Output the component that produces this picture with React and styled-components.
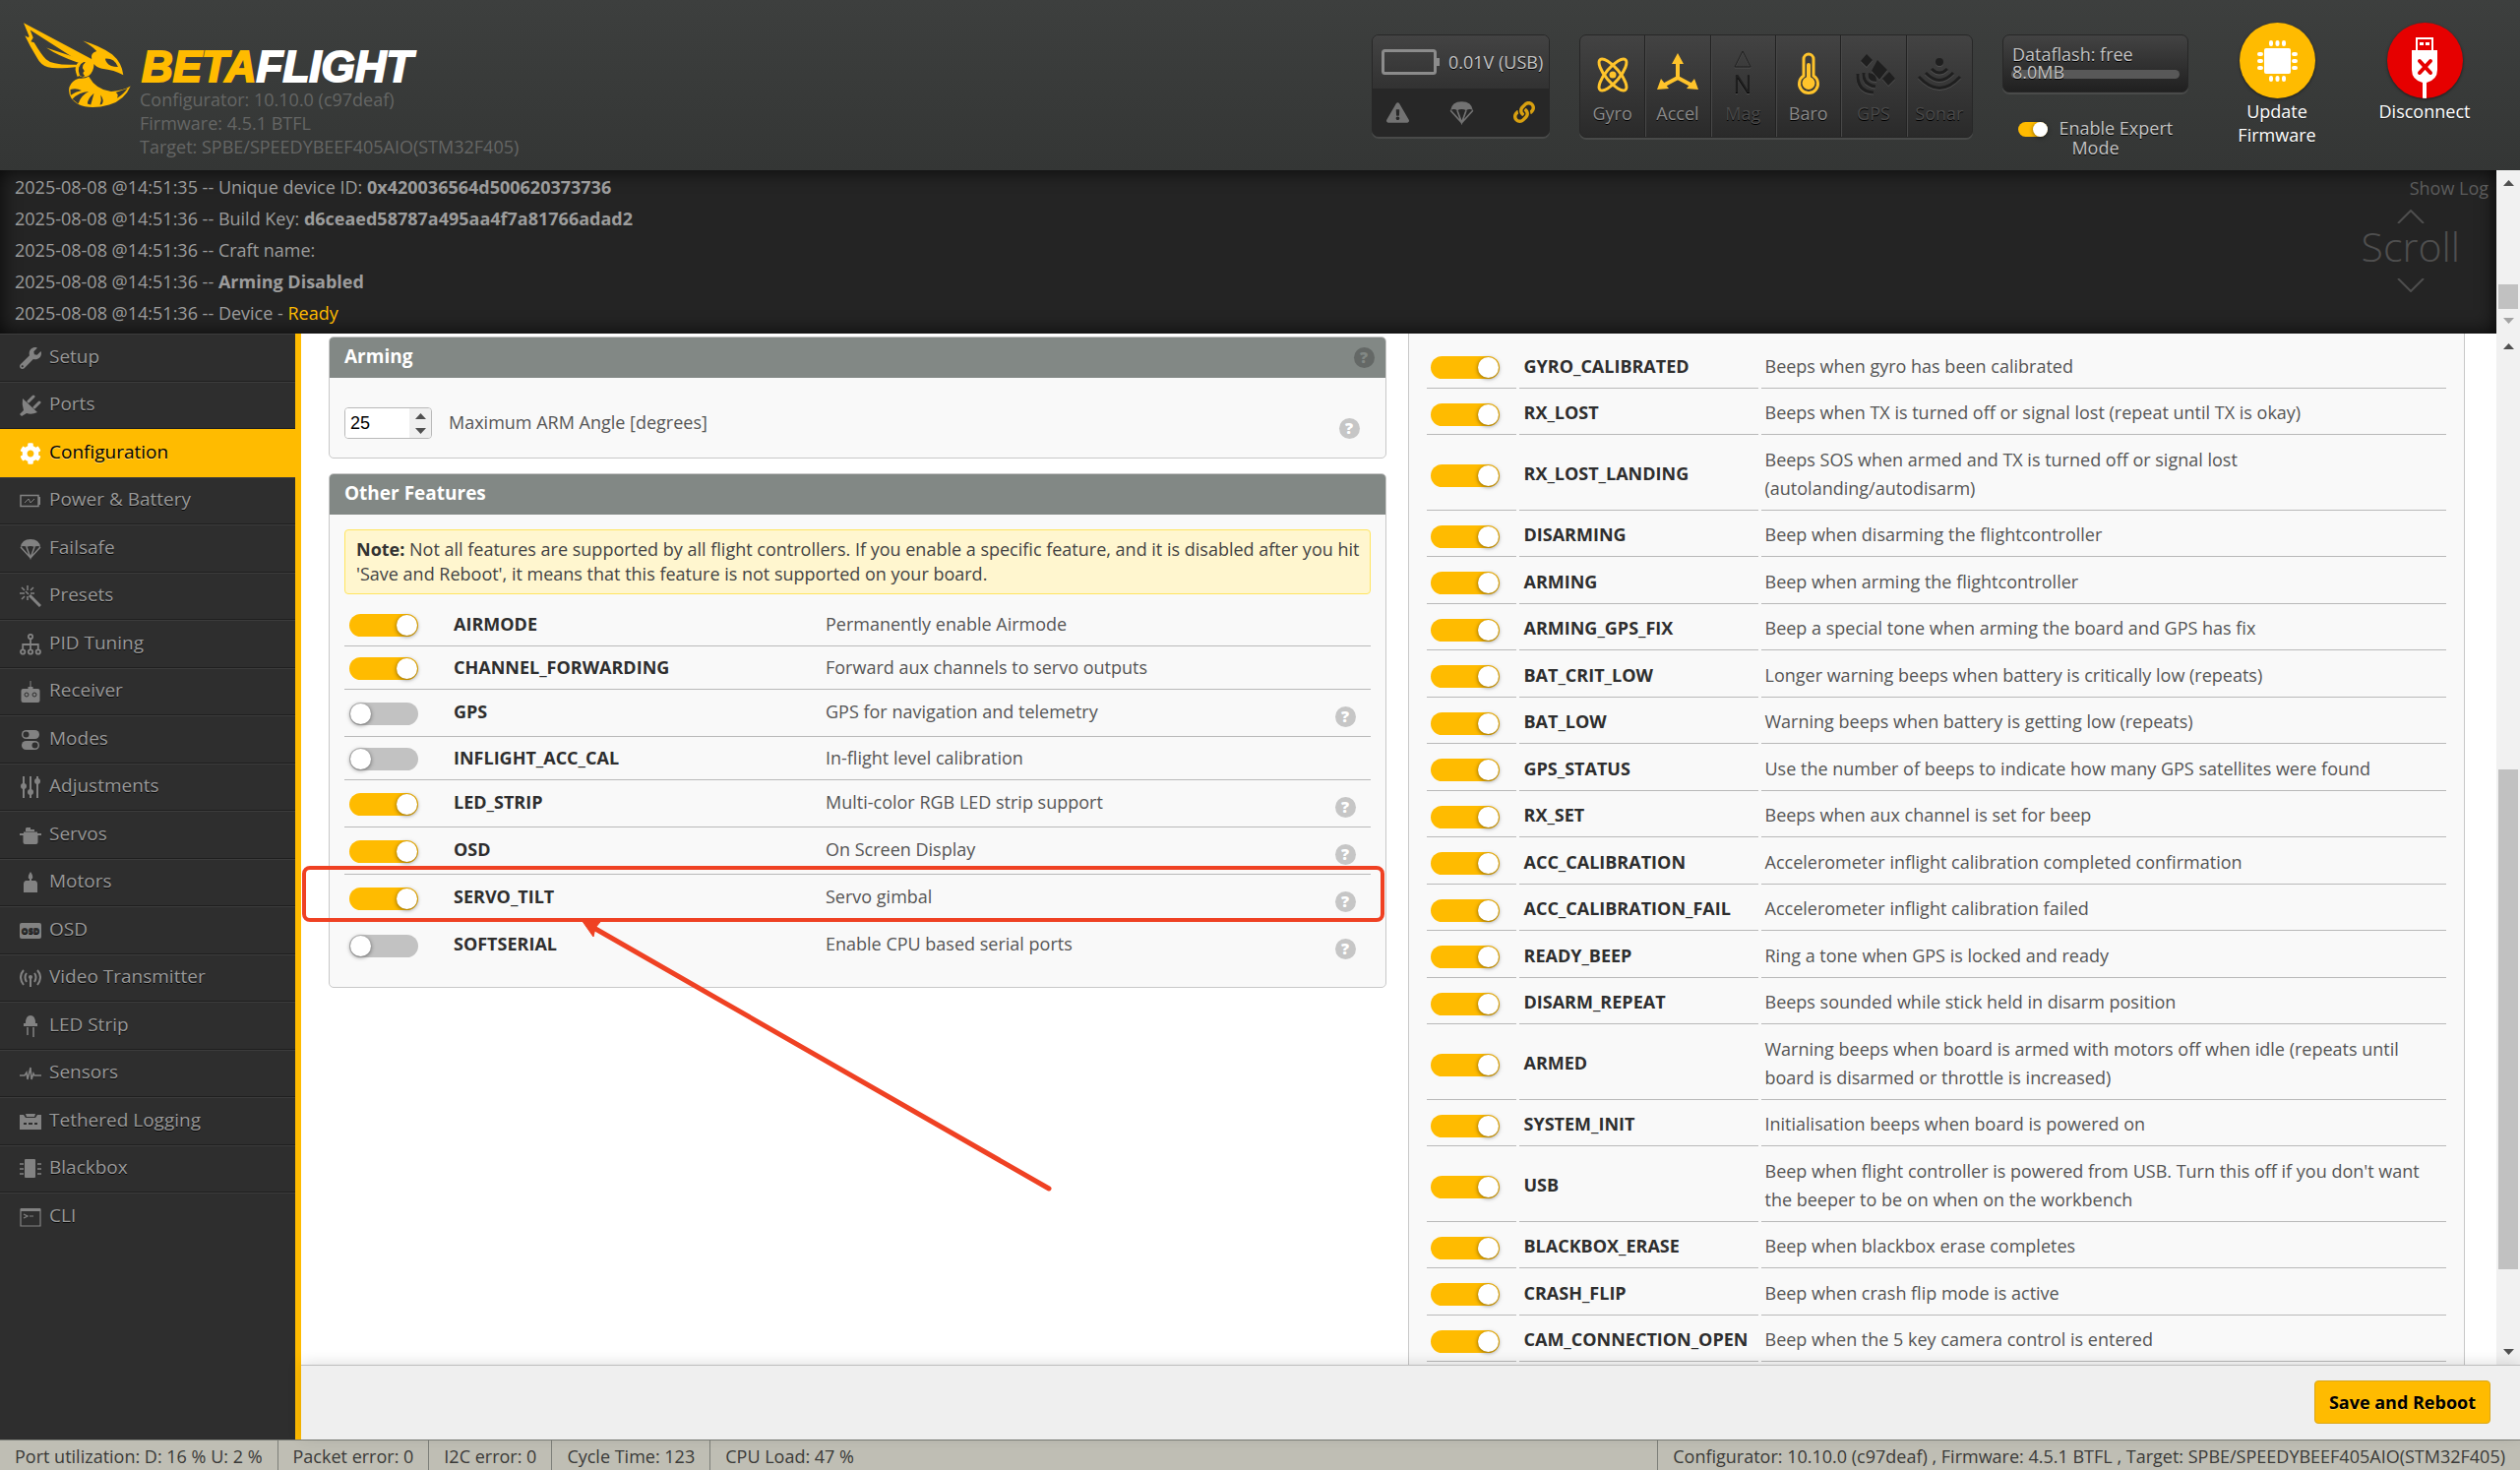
import React, { useState } from 'react';
import styled, { createGlobalStyle, css } from 'styled-components';
import { FaWrench, FaCog, FaLink, FaExclamationTriangle } from 'react-icons/fa';

const GlobalStyle = createGlobalStyle`
	* {
		box-sizing: border-box;
	}
	body {
		margin: 0;
		background: #2e2e2e;
		font-family: 'Open Sans', 'Noto Sans', sans-serif;
		font-size: 18px;
		line-height: 24px;
	}
	button, input {
		font: inherit;
	}
`;

const Page = styled.div`
	display: flex;
	flex-direction: column;
	height: 100vh;
	overflow: hidden;
`;

/* ---------- header ---------- */

const Header = styled.header`
	display: flex;
	flex: none;
	align-items: flex-start;
	gap: 30px;
	height: 173px;
	padding: 0 47px 0 24px;
	background: linear-gradient(to bottom, #3d3f3e, #343635);
`;

const Brand = styled.div`
	display: flex;
	gap: 9px;
	margin-right: auto;
	svg {
		margin-top: 22px;
	}
`;

const BrandText = styled.div`
	padding-top: 46px;
	color: #656665;
`;

const Wordmark = styled.h1`
	margin: 0;
	height: 43px;
	padding-left: 2px;
	font-family: 'Liberation Sans', Arial, sans-serif;
	font-size: 44px;
	font-weight: bold;
	font-style: italic;
	line-height: 44px;
	color: #fff;
	-webkit-text-stroke: 2px currentColor;
	span {
		color: #ffbb00;
	}
`;

const insetPanel = css`
	border: 1px solid #272727;
	border-radius: 7px;
	background: linear-gradient(to bottom, #434343, #2a2a2a);
	box-shadow: 0 2px 0 rgba(92, 92, 92, 0.5);
	text-shadow: 0 1px rgba(0, 0, 0, 1);
`;

const PowerPanel = styled.div`
	${insetPanel}
	width: 181px;
	height: 104px;
	margin-top: 35px;
	overflow: hidden;
`;

const PowerTop = styled.div`
	display: flex;
	align-items: center;
	gap: 9px;
	height: 54px;
	padding-left: 9px;
	color: #c4c4c4;
	background: linear-gradient(to bottom, #434343, #323232);
	white-space: nowrap;
`;

const PowerIcons = styled.div`
	display: flex;
	align-items: center;
	justify-content: space-between;
	height: 48px;
	padding: 0 14px;
	color: #727272;
	background: #272727;
	svg:last-child {
		color: #d8a010;
	}
`;

const SensorPanel = styled.div`
	${insetPanel}
	display: grid;
	grid-template-columns: repeat(6, 1fr);
	width: 400px;
	height: 105px;
	margin-top: 35px;
`;

const Sensor = styled.div`
	display: flex;
	flex-direction: column;
	align-items: center;
	gap: 6px;
	padding-top: 15px;
	color: ${(props) => (props.$on ? '#8b8b8b' : '#4a4a4a')};
	border-right: 1px solid #222;
	box-shadow: 1px 0 0 #484848;
	&:last-child {
		border-right: 0;
		box-shadow: none;
	}
	svg {
		overflow: visible;
		color: ${(props) => (props.$on ? '#ffc42b' : '#1f1f1f')};
		filter: ${(props) => (props.$on ? 'none' : 'drop-shadow(0 1px 0 #505050)')};
	}
`;

const FlashColumn = styled.div`
	width: 189px;
	margin-top: 35px;
	line-height: 18px;
	text-shadow: 0 1px #000;
	color: #c4c4c4;
`;

const FlashPanel = styled.div`
	${insetPanel}
	position: relative;
	height: 59px;
	padding: 10px 9px;
	background: linear-gradient(to bottom, #434343, #202020);
`;

const FlashBar = styled.div`
	position: absolute;
	left: 8px;
	right: 8px;
	top: 35px;
	height: 9px;
	border-radius: 5px;
	background: #585858;
`;

const FlashText = styled.div`
	position: relative;
	width: 140px;
`;

const ExpertLabel = styled.label`
	display: block;
	margin-top: 27px;
	text-align: center;
`;

const HeaderButtons = styled.div`
	display: flex;
	gap: 50px;
	margin: 23px 0 0 10px;
`;

const RoundButton = styled.button`
	display: flex;
	flex-direction: column;
	align-items: center;
	gap: 1px;
	width: 100px;
	padding: 0;
	border: 0;
	background: none;
	color: #fff;
	text-shadow: 0 1px rgba(0, 0, 0, 0.5);
	svg {
		border-radius: 50%;
		background: ${(props) => props.$color};
		box-shadow: 0 1px 3px rgba(0, 0, 0, 0.5);
	}
`;

/* ---------- switch ---------- */

const Switch = styled.input.attrs({ type: 'checkbox' })`
	appearance: none;
	display: inline-block;
	vertical-align: middle;
	position: relative;
	width: ${(props) => (props.$small ? 30 : 70)}px;
	height: ${(props) => (props.$small ? 15 : 23)}px;
	margin: ${(props) => (props.$small ? '0 7px 2px 0' : '0')};
	border-radius: 12px;
	background: #c2c2c2;
	&::before {
		content: '';
		position: absolute;
		top: ${(props) => (props.$small ? 0 : 1)}px;
		left: ${(props) => (props.$small ? 0 : 1)}px;
		width: ${(props) => (props.$small ? 15 : 21)}px;
		height: ${(props) => (props.$small ? 15 : 21)}px;
		border-radius: 50%;
		background: #fff;
		box-shadow: 0 1px 4px rgba(0, 0, 0, 0.5);
	}
	&:checked {
		background: #ffbb00;
	}
	&:checked::before {
		left: auto;
		right: ${(props) => (props.$small ? 0 : 1)}px;
	}
`;

/* ---------- log ---------- */

const Log = styled.section`
	display: flex;
	flex: none;
	height: 166px;
	background: #242424;
	color: #9c9c9c;
`;

const LogBody = styled.div`
	display: flex;
	flex: 1;
	justify-content: space-between;
	padding: 1px 8px 0 15px;
	box-shadow: inset 0 0 20px rgba(0, 0, 0, 0.8);
`;

const LogLine = styled.p`
	margin: 0;
	line-height: 32px;
	white-space: nowrap;
	span {
		color: #ffbb00;
	}
`;

const LogSide = styled.div`
	display: flex;
	flex-direction: column;
	align-items: flex-end;
	padding-top: 5px;
`;

const ShowLog = styled.button`
	padding: 0;
	border: 0;
	background: none;
	color: #5c5c5c;
`;

const ScrollHint = styled.div`
	display: flex;
	flex-direction: column;
	align-items: center;
	margin: 10px 29px 0 0;
	font-size: 41px;
	font-weight: 300;
	line-height: 46px;
	color: #4f4f4f;
	svg:last-child {
		margin-top: 10px;
	}
`;

const Track = styled.div`
	display: flex;
	flex: none;
	flex-direction: column;
	justify-content: space-between;
	align-items: center;
	width: 24px;
	padding: 10px 0;
	background: #f1f1f1;
	color: #505050;
`;

const Thumb = styled.div`
	width: 20px;
	height: ${(props) => props.$size};
	margin-top: ${(props) => props.$before};
	margin-bottom: auto;
	background: #c1c1c1;
`;

/* ---------- sidebar ---------- */

const Main = styled.div`
	display: flex;
	flex: 1;
	min-height: 0;
`;

const Sidebar = styled.nav`
	flex: none;
	width: 306px;
	border-right: 6px solid #ffbb00;
	background: #2e2e2e;
	ul {
		margin: 0;
		padding: 0;
		list-style: none;
	}
	li:nth-child(even) a {
		height: 48px;
	}
`;

const NavLink = styled.a`
	display: flex;
	align-items: center;
	gap: 8px;
	height: 49px;
	padding: 0 20px 4px;
	border-top: 1px solid #3c3c3c;
	border-bottom: 1px solid #1f1f1f;
	font-size: 19px;
	color: #999;
	text-decoration: none;
	text-shadow: 0 1px rgba(0, 0, 0, 0.9);
	svg {
		flex: none;
		margin-top: 4px;
		color: #828282;
	}
	${(props) =>
		props.$last &&
		css`
			border-bottom: 0;
		`}
	${(props) =>
		props.$active &&
		css`
			border-color: #ffbb00;
			background: #ffbb00;
			color: #000;
			text-shadow: 0 1px rgba(255, 255, 255, 0.45);
			svg {
				color: #fff;
			}
		`}
`;

/* ---------- content ---------- */

const Content = styled.main`
	display: flex;
	flex: 1;
	flex-direction: column;
	min-width: 0;
	background: #fff;
`;

const ScrollArea = styled.div`
	display: flex;
	flex: 1;
	min-height: 0;
`;

const Columns = styled.div`
	position: relative;
	display: grid;
	grid-template-columns: 1fr 1fr;
	gap: 22px;
	flex: 1;
	padding: 0 32px 0 28px;
`;

const LeftColumn = styled.div`
	display: flex;
	flex-direction: column;
	gap: 15px;
	padding-top: 3px;
`;

const Panel = styled.section`
	overflow: hidden;
	border: 1px solid #c8c8c8;
	border-radius: 5px;
	background: #f9f9f9;
`;

const PanelHead = styled.div`
	display: flex;
	align-items: center;
	justify-content: space-between;
	height: 41px;
	padding: 0 11px 0 15px;
	background: #828885;
	h2 {
		margin: 0;
		padding-bottom: 3px;
		font-size: 19px;
		font-weight: 700;
		color: #fff;
	}
`;

const ArmingBody = styled.div`
	display: flex;
	align-items: center;
	padding: 30px 26px 19px 15px;
	label {
		margin: 0 auto 3px 17px;
		color: #555;
	}
`;

const Stepper = styled.div`
	display: flex;
	width: 89px;
	height: 32px;
	overflow: hidden;
	border: 1px solid #b9b9b9;
	border-radius: 4px;
	input {
		flex: 1;
		min-width: 0;
		padding: 0 5px;
		border: 0;
		font-family: 'Liberation Sans', Arial, sans-serif;
		color: #000;
		background: #fff;
		appearance: textfield;
	}
	input::-webkit-inner-spin-button {
		display: none;
	}
`;

const StepButtons = styled.div`
	display: flex;
	flex-direction: column;
	width: 22px;
	background: #f0f0f0;
	color: #505050;
	button {
		display: flex;
		flex: 1;
		align-items: center;
		justify-content: center;
		padding: 0;
		border: 0;
		background: none;
		color: inherit;
	}
`;

const HelpDot = styled.button`
	flex: none;
	width: 21px;
	height: 21px;
	padding: 0;
	border: 0;
	border-radius: 50%;
	background: ${(props) => (props.$dark ? '#646866' : '#c6c6c6')};
	color: ${(props) => (props.$dark ? '#828885' : '#fff')};
	font-size: 16px;
	font-weight: 800;
	line-height: 21px;
	align-self: ${(props) => (props.$low ? 'flex-end' : 'center')};
`;

const FeaturesBody = styled.div`
	padding: 15px 15px 19px;
`;

const Note = styled.p`
	margin: 0 0 8px;
	padding: 7px 8px 7px 11px;
	border: 1px solid #ffe55f;
	border-radius: 4px;
	background: #fff6cf;
	color: #434343;
	line-height: 25px;
	strong {
		font-weight: 700;
		color: #333;
	}
`;

const FeatureTable = styled.table`
	width: 100%;
	border-collapse: collapse;
	table-layout: fixed;
	color: #555;
	th, td {
		padding: 0;
		text-align: left;
	}
	th {
		font-weight: 700;
		color: #2e2e2e;
	}
`;

const FeatureRow = styled.tr`
	height: ${(props) => (props.$help ? 48 : 44)}px;
	&:not(:last-child) {
		border-bottom: 1px solid #b9b9b9;
	}
	th, td:nth-child(3) {
		padding-bottom: ${(props) => (props.$help ? 2 : 0)}px;
	}
	td:first-child {
		padding-left: 5px;
	}
	td:last-child {
		padding: 6px 15px 0 0;
		text-align: right;
	}
`;

const BeeperPanel = styled.section`
	overflow: hidden;
	min-width: 0;
	padding: 8px 15px 0;
	border: solid #c8c8c8;
	border-width: 0 1px;
	background: #f9f9f9;
`;

const BeeperTable = styled.table`
	width: 100%;
	border-spacing: 3px;
	table-layout: fixed;
	color: #555;
	line-height: 29px;
	th, td {
		height: 45px;
		padding: 0 4px;
		border-bottom: 1px solid #b9b9b9;
		text-align: left;
	}
	tr:nth-child(even) > * {
		height: 44px;
	}
	th {
		padding-left: 5px;
		font-weight: 700;
		color: #2e2e2e;
		white-space: nowrap;
	}
`;

const BeeperRow = styled.tr`
	${(props) =>
		props.$tall &&
		css`
			&& > * {
				height: 74px;
			}
		`}
`;

const Annotation = styled.svg`
	position: absolute;
	left: 0;
	top: 0;
	pointer-events: none;
`;

const Toolbar = styled.div`
	z-index: 1;
	display: flex;
	flex: none;
	align-items: flex-start;
	justify-content: flex-end;
	height: 76px;
	padding: 15px 30px 0;
	border-top: 1px solid #bdbdbd;
	background: #efefef;
	box-shadow: 0 -2px 14px rgba(0, 0, 0, 0.12);
`;

const SaveButton = styled.button`
	height: 44px;
	padding: 0 14px;
	border: 1px solid #dba718;
	border-radius: 4px;
	background: #ffbb00;
	color: #000;
	font-weight: 700;
	text-shadow: 0 1px rgba(255, 255, 255, 0.3);
`;

const StatusBar = styled.footer`
	display: flex;
	flex: none;
	height: 31px;
	border-top: 1px solid #7d7f79;
	background: #bfbeb4;
	color: #3a3a38;
	line-height: 32px;
	white-space: nowrap;
`;

const StatusItem = styled.span`
	padding: 0 15px;
	border-right: 1px solid #7d7f79;
	&:nth-last-child(2) {
		border-right: 0;
		margin-right: auto;
	}
	&:last-child {
		border-right: 0;
		border-left: 1px solid #7d7f79;
	}
`;

/* ---------- icons ---------- */

const BeeLogo = () => (
	<svg width='109' height='88' viewBox='24 24 326 262' fill='#ffbb00'>
		<path d='M24 27 L232 138 L216 148 L190 142 L44 49 L53 72 L46 84 L56 87 Q78 124 92 138 Q112 157 184 154 L192 160 Q122 169 98 162 Q76 156 64 132 Q44 100 28 66 L38 71 L41 68 Z' />
		<path d='M93 103 L212 142 L200 150 L186 147 Q130 128 93 103 Z' />
		<path d='M204 82 Q256 97 293 123 Q323 148 327 186 Q300 170 262 166 Q246 163 238 152 Q237 176 222 188 Q204 197 188 186 Q176 168 186 152 Q192 142 206 143 L231 138 Q226 118 246 113 Q232 98 204 82 Z' />
		<path fill='#393b3a' d='M272 136 Q300 134 311 161 Q286 161 278 149 Q273 143 272 136 Z' />
		<path fill='#393b3a' d='M207 146 Q184 156 194 186 Q202 194 210 188 Q200 180 209 174 L203 164 Q203 154 212 147 Z' />
		<path d='M190 154 Q178 170 188 192 L192 188 Q184 170 196 154 Z' />
		<path d='M192 196 Q210 198 222 190 Q244 230 290 236 Q330 232 349 219 Q331 262 284 276 Q226 292 189 274 Q156 254 163 222 Q170 202 192 196 Z' />
		<path fill='#393b3a' d='M166 230 Q184 224 200 233 Q182 236 167 247 Z M172 259 Q192 238 222 236 Q198 248 190 273 Z M218 273 Q218 258 238 241 L228 276 Z M256 276 Q262 262 258 246 Q270 262 262 275 Z M304 239 L340 226 Q330 242 308 256 Q314 244 304 239 Z' />
	</svg>
);

const sensorIcons = {
	Gyro: (
		<g fill='none' stroke='currentColor' strokeWidth='3'>
			<ellipse cx='22' cy='25' rx='7' ry='20' transform='rotate(40 22 25)' />
			<ellipse cx='22' cy='25' rx='7' ry='20' transform='rotate(-40 22 25)' />
			<circle cx='22' cy='25' r='3.500' fill='currentColor' stroke='none' />
		</g>
	),
	Accel: (
		<g fill='currentColor'>
			<path d='M22 3 L28 14 H16 Z M1 40 L5 29 L13 39 Z M43 40 L39 29 L31 39 Z' />
			<path d='M22 12 V28 L7 36 M22 28 L37 36' fill='none' stroke='currentColor' strokeWidth='4' />
		</g>
	),
	Mag: (
		<g>
			<path d='M22 1 L30 17 H14 Z' fill='none' stroke='currentColor' strokeWidth='1' />
			<text x='22' y='43' fontSize='25' textAnchor='middle' fill='currentColor'>
				N
			</text>
		</g>
	),
	Baro: (
		<g>
			<path
				d='M17 26 V9 a5 5 0 0 1 10 0 V26 a9.500 9.500 0 1 1 -10 0 Z'
				fill='none'
				stroke='currentColor'
				strokeWidth='3'
			/>
			<circle cx='22' cy='33.500' r='6.500' fill='currentColor' />
			<path d='M22 15 V32' stroke='currentColor' strokeWidth='4' strokeLinecap='round' />
		</g>
	),
	GPS: (
		<g fill='currentColor'>
			<path d='M15 4 L21 10 L15 17 L9 11 Z M26 10 L36 20 L28 30 L20 21 Z M38 22 L44 29 L37 36 L31 29 Z' />
			<path d='M17 23 Q26 24 25 32 Q15 32 17 23 Z' />
			<path
				d='M12 23 Q11 35 24 37 M6 24 Q5 42 22 43'
				fill='none'
				stroke='currentColor'
				strokeWidth='3'
			/>
		</g>
	),
	Sonar: (
		<g fill='none' stroke='currentColor' strokeWidth='3'>
			<circle cx='22' cy='12' r='4' fill='currentColor' stroke='none' />
			<path d='M14 19 Q22 27 30 19 M8 23 Q22 38 36 23 M1 27 Q22 50 43 27' />
		</g>
	),
};

const Parachute = ({ size = 22 }) => (
	<svg width={size} height={size} viewBox='0 0 22 22' fill='currentColor'>
		<path d='M1 9 Q2 1 11 1 Q20 1 21 9 Q18 7 15 9 Q11 7 7 9 Q4 7 1 9 Z' />
		<path d='M1 9 L11 20 L21 9 M7 9 L11 20 L15 9' fill='none' stroke='currentColor' strokeWidth='1.500' />
	</svg>
);

const NavIcon = ({ children }) => (
	<svg width='22' height='22' viewBox='0 0 22 22' fill='currentColor'>
		{children}
	</svg>
);

const line = { fill: 'none', stroke: 'currentColor' };

const navItems = [
	{ label: 'Setup', icon: <FaWrench size={22} /> },
	{
		label: 'Ports',
		icon: (
			<NavIcon>
				<path d='M3 4 L18 18 Q12 21 7 19 L2 22 L0 20 L4 16 Q2 10 3 4 Z' />
				<path {...line} strokeWidth='3' strokeLinecap='round' d='M9 7 L14 2 M15 13 L20 8' />
			</NavIcon>
		),
	},
	{ label: 'Configuration', icon: <FaCog size={22} />, active: true },
	{
		label: 'Power & Battery',
		icon: (
			<NavIcon>
				<path {...line} strokeWidth='1.500' d='M1 5.500 H19 V16.500 H1 Z' />
				<path {...line} strokeWidth='1' d='M5 13 L9 9 L11 13 L15 9' />
				<path d='M19 7 h2 v8 h-2 Z' />
			</NavIcon>
		),
	},
	{ label: 'Failsafe', icon: <Parachute /> },
	{
		label: 'Presets',
		icon: (
			<NavIcon>
				<path {...line} strokeWidth='3' d='M10 10 L21 21' />
				<path
					{...line}
					strokeWidth='1.500'
					d='M8 0 V5 M2 2 L5 5 M0 8 H5 M2 14 L5 11 M14 2 L11 5 M11 8 H15 M8 11 V15 M6 6 L9 9'
				/>
			</NavIcon>
		),
	},
	{
		label: 'PID Tuning',
		icon: (
			<NavIcon>
				<g {...line} strokeWidth='1.800'>
					<circle cx='11' cy='3' r='2.200' />
					<circle cx='3.200' cy='18.500' r='2.200' />
					<circle cx='11' cy='18.500' r='2.200' />
					<circle cx='18.800' cy='18.500' r='2.200' />
					<path d='M11 5 V16 M3.200 16 V11 H18.800 V16' />
				</g>
			</NavIcon>
		),
	},
	{
		label: 'Receiver',
		icon: (
			<NavIcon>
				<path d='M10.500 0 h1 v6 h2 v2 h5 q2 0 2 2 v10 q0 2 -2 2 h-15 q-2 0 -2 -2 v-10 q0 -2 2 -2 h5 v-2 h2 Z' />
				<circle cx='7' cy='14' r='2' fill='#828282' stroke='#2e2e2e' />
				<circle cx='15' cy='14' r='2' fill='#828282' stroke='#2e2e2e' />
			</NavIcon>
		),
	},
	{
		label: 'Modes',
		icon: (
			<NavIcon>
				<rect x='2' y='1' width='18' height='9' rx='4.500' />
				<rect x='2' y='12' width='18' height='9' rx='4.500' />
				<circle cx='6.500' cy='5.500' r='3' fill='#2e2e2e' />
				<circle cx='15.500' cy='16.500' r='3' fill='#2e2e2e' />
			</NavIcon>
		),
	},
	{
		label: 'Adjustments',
		icon: (
			<NavIcon>
				<path {...line} strokeWidth='2' d='M4 0 V22 M11 0 V22 M18 0 V22' />
				<circle cx='4' cy='10' r='3' />
				<circle cx='11' cy='16' r='3' />
				<circle cx='18' cy='5' r='3' />
			</NavIcon>
		),
	},
	{
		label: 'Servos',
		icon: (
			<NavIcon>
				<path d='M7 3 h4 v2 h4 v2 H6 V4 Z M4 7.500 H18 V9 H22 V11 H18.500 V18 q0 2 -2 2 H5.500 q-2 0 -2 -2 V11 H0 V9 H4 Z' />
			</NavIcon>
		),
	},
	{
		label: 'Motors',
		icon: (
			<NavIcon>
				<path d='M11 0 Q14 4 13 7 H12 V9 H16 Q18 10 18 12 V21 H4 V12 Q4 10 6 9 H10 V7 H9 Q8 4 11 0 Z' />
			</NavIcon>
		),
	},
	{
		label: 'OSD',
		icon: (
			<NavIcon>
				<rect x='0' y='3' width='22' height='16' rx='2' />
				<text x='11' y='14' fontSize='9' fontWeight='800' textAnchor='middle' fill='#2e2e2e'>
					OSD
				</text>
			</NavIcon>
		),
	},
	{
		label: 'Video Transmitter',
		icon: (
			<NavIcon>
				<g {...line} strokeWidth='2'>
					<path d='M4 3 Q-2 10 4 18 M7 6 Q4 10 7 15 M15 6 Q18 10 15 15 M18 3 Q24 10 18 18 M11 10 V20' />
				</g>
				<circle cx='11' cy='10' r='2' />
			</NavIcon>
		),
	},
	{
		label: 'LED Strip',
		icon: (
			<NavIcon>
				<path d='M6 8 Q6 0 11 0 Q16 0 16 8 H18 V11 H4 V8 Z' />
				<path {...line} strokeWidth='1.500' d='M8 12 V20 M14 12 V22' />
			</NavIcon>
		),
	},
	{
		label: 'Sensors',
		icon: (
			<NavIcon>
				<path {...line} strokeWidth='1.500' d='M0 13 H5 L7 10 L8 17 L11 5 L12 17 L14 11 L15 13 H22' />
			</NavIcon>
		),
	},
	{
		label: 'Tethered Logging',
		icon: (
			<NavIcon>
				<path d='M0 4 H4 L6 7 H16 L18 4 H22 V19 H0 Z M6 3 H16 L15 6 H7 Z' />
				<path stroke='#2e2e2e' strokeWidth='2' d='M4 13 H7 M9 13 H13 M15 13 H18' />
			</NavIcon>
		),
	},
	{
		label: 'Blackbox',
		icon: (
			<NavIcon>
				<rect x='5' y='1' width='11' height='19' rx='1' />
				<path {...line} strokeWidth='1.500' d='M0 6 H4 M0 11 H4 M0 16 H4 M18 6 H22 M18 11 H22 M18 16 H22' />
			</NavIcon>
		),
	},
	{
		label: 'CLI',
		icon: (
			<NavIcon>
				<path {...line} strokeWidth='1.200' d='M1 3 H21 V20 H1 Z M4 8 L8 10 L4 12 M10 10 H14' />
				<path d='M1 2 H21 V5 H1 Z' />
			</NavIcon>
		),
	},
];

const logLines = [
	['2025-08-08 @14:51:35 -- Unique device ID: ', <b>0x420036564d500620373736</b>],
	['2025-08-08 @14:51:36 -- Build Key: ', <b>d6ceaed58787a495aa4f7a81766adad2</b>],
	['2025-08-08 @14:51:36 -- Craft name:', null],
	['2025-08-08 @14:51:36 -- ', <b>Arming Disabled</b>],
	['2025-08-08 @14:51:36 -- Device - ', <span>Ready</span>],
];

const features = [
	{ name: 'AIRMODE', text: 'Permanently enable Airmode', on: true },
	{ name: 'CHANNEL_FORWARDING', text: 'Forward aux channels to servo outputs', on: true },
	{ name: 'GPS', text: 'GPS for navigation and telemetry', help: true },
	{ name: 'INFLIGHT_ACC_CAL', text: 'In-flight level calibration' },
	{ name: 'LED_STRIP', text: 'Multi-color RGB LED strip support', on: true, help: true },
	{ name: 'OSD', text: 'On Screen Display', on: true, help: true },
	{ name: 'SERVO_TILT', text: 'Servo gimbal', on: true, help: true },
	{ name: 'SOFTSERIAL', text: 'Enable CPU based serial ports', help: true },
];

const beepers = [
	['GYRO_CALIBRATED', 'Beeps when gyro has been calibrated'],
	['RX_LOST', 'Beeps when TX is turned off or signal lost (repeat until TX is okay)'],
	['RX_LOST_LANDING', 'Beeps SOS when armed and TX is turned off or signal lost (autolanding/autodisarm)', true],
	['DISARMING', 'Beep when disarming the flightcontroller'],
	['ARMING', 'Beep when arming the flightcontroller'],
	['ARMING_GPS_FIX', 'Beep a special tone when arming the board and GPS has fix'],
	['BAT_CRIT_LOW', 'Longer warning beeps when battery is critically low (repeats)'],
	['BAT_LOW', 'Warning beeps when battery is getting low (repeats)'],
	['GPS_STATUS', 'Use the number of beeps to indicate how many GPS satellites were found'],
	['RX_SET', 'Beeps when aux channel is set for beep'],
	['ACC_CALIBRATION', 'Accelerometer inflight calibration completed confirmation'],
	['ACC_CALIBRATION_FAIL', 'Accelerometer inflight calibration failed'],
	['READY_BEEP', 'Ring a tone when GPS is locked and ready'],
	['DISARM_REPEAT', 'Beeps sounded while stick held in disarm position'],
	['ARMED', 'Warning beeps when board is armed with motors off when idle (repeats until board is disarmed or throttle is increased)', true],
	['SYSTEM_INIT', 'Initialisation beeps when board is powered on'],
	['USB', "Beep when flight controller is powered from USB. Turn this off if you don't want the beeper to be on when on the workbench", true],
	['BLACKBOX_ERASE', 'Beep when blackbox erase completes'],
	['CRASH_FLIP', 'Beep when crash flip mode is active'],
	['CAM_CONNECTION_OPEN', 'Beep when the 5 key camera control is entered'],
];

const Arrow = ({ down, color = 'currentColor' }) => (
	<svg width='11' height='6' viewBox='0 0 11 6' fill={color}>
		<path d={down ? 'M0 0 H11 L5.500 6 Z' : 'M0 6 H11 L5.500 0 Z'} />
	</svg>
);

const Chevron = ({ down }) => (
	<svg width='28' height='14' viewBox='0 0 28 14' fill='none' stroke='currentColor' strokeWidth='2'>
		<path d={down ? 'M1 0 L14 13 L27 0' : 'M1 14 L14 1 L27 14'} />
	</svg>
);

function TopHeader() {
	return (
		<Header>
			<Brand>
				<BeeLogo />
				<BrandText>
					<Wordmark>
						<span>BETA</span>FLIGHT
					</Wordmark>
					<div>Configurator: 10.10.0 (c97deaf)</div>
					<div>Firmware: 4.5.1 BTFL</div>
					<div>Target: SPBE/SPEEDYBEEF405AIO(STM32F405)</div>
				</BrandText>
			</Brand>
			<PowerPanel>
				<PowerTop>
					<svg width='59' height='26' viewBox='0 0 59 26'>
						<rect x='1.500' y='1.500' width='53' height='23' rx='2' fill='none' stroke='#8b8b8b' strokeWidth='3' />
						<path d='M55 9 h4 v8 h-4 Z' fill='#8b8b8b' />
					</svg>
					0.01V (USB)
				</PowerTop>
				<PowerIcons>
					<FaExclamationTriangle size={23} />
					<Parachute size={25} />
					<FaLink size={22} />
				</PowerIcons>
			</PowerPanel>
			<SensorPanel>
				{['Gyro', 'Accel', 'Mag', 'Baro', 'GPS', 'Sonar'].map((name) => (
					<Sensor key={name} $on={['Gyro', 'Accel', 'Baro'].includes(name)}>
						<svg width='44' height='46' viewBox='0 0 44 46'>
							{sensorIcons[name]}
						</svg>
						{name}
					</Sensor>
				))}
			</SensorPanel>
			<FlashColumn>
				<FlashPanel>
					<FlashBar />
					<FlashText>Dataflash: free 8.0MB</FlashText>
				</FlashPanel>
				<ExpertLabel>
					<Switch $small defaultChecked /> Enable Expert Mode
				</ExpertLabel>
			</FlashColumn>
			<HeaderButtons>
				<RoundButton $color='#ffbb00'>
					<svg width='77' height='77' viewBox='0 0 77 77' fill='#fff'>
						<rect x='25' y='26' width='27' height='26' rx='2' />
						<path
							stroke='#fff'
							strokeWidth='4'
							strokeLinecap='round'
							d='M32 20 V22 M38.500 20 V22 M45 20 V22 M32 56 V58 M38.500 56 V58 M45 56 V58 M20 32 H22 M20 39 H22 M20 46 H22 M55 32 H57 M55 39 H57 M55 46 H57'
						/>
					</svg>
					Update Firmware
				</RoundButton>
				<RoundButton $color='#e60000'>
					<svg width='77' height='77' viewBox='0 0 77 77' fill='#fff'>
						<path d='M29 15 H47 V28 H51 V48 Q51 58 40 61 V77 H36 V61 Q25 58 25 48 V28 H29 Z' />
						<path fill='#e60000' d='M31 17 H45 V28 H31 Z' />
						<path d='M33 20 h4 v3 h-4 Z M39 20 h4 v3 h-4 Z' />
						<path d='M33 39 L44 51 M44 39 L33 51' stroke='#e60000' strokeWidth='4' strokeLinecap='round' />
					</svg>
					Disconnect
				</RoundButton>
			</HeaderButtons>
		</Header>
	);
}

function LogPanel() {
	return (
		<Log>
			<LogBody>
				<div>
					{logLines.map(([text, value], i) => (
						<LogLine key={i}>
							{text}
							{value}
						</LogLine>
					))}
				</div>
				<LogSide>
					<ShowLog>Show Log</ShowLog>
					<ScrollHint>
						<Chevron />
						Scroll
						<Chevron down />
					</ScrollHint>
				</LogSide>
			</LogBody>
			<Track>
				<Arrow />
				<Thumb $size='25px' $before='100px' />
				<Arrow down color='#a3a3a3' />
			</Track>
		</Log>
	);
}

function Arming() {
	const [angle, setAngle] = useState(25);

	return (
		<Panel>
			<PanelHead>
				<h2>Arming</h2>
				<HelpDot $dark>?</HelpDot>
			</PanelHead>
			<ArmingBody>
				<Stepper>
					<input id='arm-angle' type='number' value={angle} onChange={(e) => setAngle(Number(e.target.value))} />
					<StepButtons>
						<button aria-label='Increase' onClick={() => setAngle(angle + 1)}>
							<Arrow />
						</button>
						<button aria-label='Decrease' onClick={() => setAngle(angle - 1)}>
							<Arrow down />
						</button>
					</StepButtons>
				</Stepper>
				<label htmlFor='arm-angle'>Maximum ARM Angle [degrees]</label>
				<HelpDot $low>?</HelpDot>
			</ArmingBody>
		</Panel>
	);
}

function OtherFeatures() {
	return (
		<Panel>
			<PanelHead>
				<h2>Other Features</h2>
			</PanelHead>
			<FeaturesBody>
				<Note>
					<strong>Note:</strong> Not all features are supported by all flight controllers. If you enable a specific
					feature, and it is disabled after you hit 'Save and Reboot', it means that this feature is not supported on
					your board.
				</Note>
				<FeatureTable>
					<colgroup>
						<col width='111' />
						<col width='378' />
						<col />
						<col width='60' />
					</colgroup>
					<tbody>
						{features.map((f) => (
							<FeatureRow key={f.name} $help={f.help}>
								<td>
									<Switch id={f.name} defaultChecked={f.on} />
								</td>
								<th>
									<label htmlFor={f.name}>{f.name}</label>
								</th>
								<td>{f.text}</td>
								<td>{f.help && <HelpDot>?</HelpDot>}</td>
							</FeatureRow>
						))}
					</tbody>
				</FeatureTable>
			</FeaturesBody>
		</Panel>
	);
}

function Beepers() {
	return (
		<BeeperPanel>
			<BeeperTable>
				<colgroup>
					<col width='91' />
					<col width='243' />
					<col />
				</colgroup>
				<tbody>
					{beepers.map(([name, text, tall]) => (
						<BeeperRow key={name} $tall={tall}>
							<td>
								<Switch id={`beep-${name}`} defaultChecked />
							</td>
							<th>
								<label htmlFor={`beep-${name}`}>{name}</label>
							</th>
							<td>{text}</td>
						</BeeperRow>
					))}
				</tbody>
			</BeeperTable>
		</BeeperPanel>
	);
}

function App() {
	return (
		<Page>
			<GlobalStyle />
			<TopHeader />
			<LogPanel />
			<Main>
				<Sidebar>
					<ul>
						{navItems.map(({ label, icon, active }) => (
							<li key={label}>
								<NavLink href='#' $active={active} $last={label === 'CLI'}>
									{icon}
									{label}
								</NavLink>
							</li>
						))}
					</ul>
				</Sidebar>
				<Content>
					<ScrollArea>
						<Columns>
							<LeftColumn>
								<Arming />
								<OtherFeatures />
							</LeftColumn>
							<Beepers />
							<Annotation width='1120' height='880' fill='none' stroke='#ef4123' strokeWidth='4'>
								<rect x='3' y='543' width='1096' height='53' rx='6' />
								<path d='M294 602 L760 869' strokeWidth='5' strokeLinecap='round' />
								<path d='M285 596 L304 598 L299 604 L297 613 Z' fill='#ef4123' strokeWidth='1' />
							</Annotation>
						</Columns>
						<Track>
							<Arrow />
							<Thumb $size='508px' $before='427px' />
							<Arrow down />
						</Track>
					</ScrollArea>
					<Toolbar>
						<SaveButton>Save and Reboot</SaveButton>
					</Toolbar>
				</Content>
			</Main>
			<StatusBar>
				<StatusItem>Port utilization: D: 16 % U: 2 %</StatusItem>
				<StatusItem>Packet error: 0</StatusItem>
				<StatusItem>I2C error: 0</StatusItem>
				<StatusItem>Cycle Time: 123</StatusItem>
				<StatusItem>CPU Load: 47 %</StatusItem>
				<StatusItem>Configurator: 10.10.0 (c97deaf) , Firmware: 4.5.1 BTFL , Target: SPBE/SPEEDYBEEF405AIO(STM32F405)</StatusItem>
			</StatusBar>
		</Page>
	);
}

export default App;
